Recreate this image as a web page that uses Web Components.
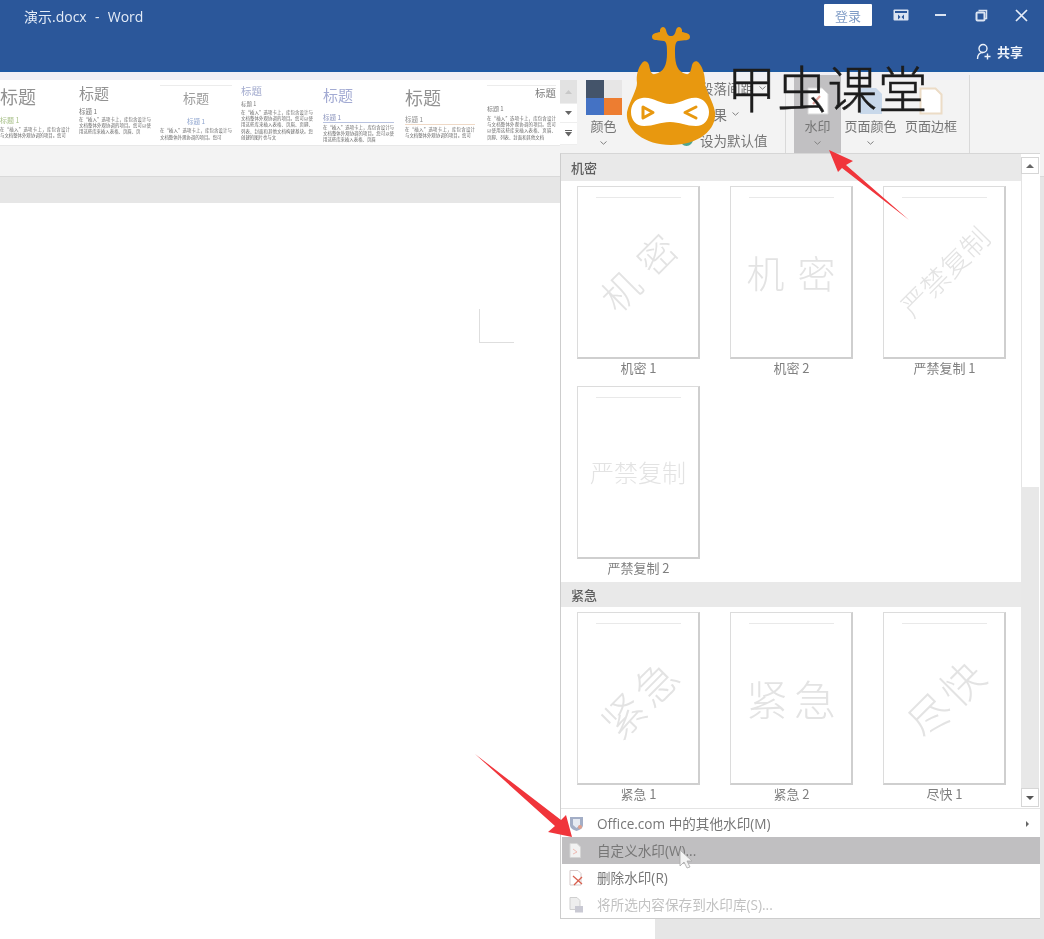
<!DOCTYPE html>
<html lang="zh-CN">
<head>
<meta charset="utf-8">
<title>演示.docx - Word</title>
<style>
html,body{margin:0;padding:0;background:#fff}
body{font-family:"Open Sans","Noto Sans CJK SC",sans-serif}
</style>
</head>
<body>
<word-app>
  <title-bar slot="top" doc="演示.docx  -  Word"></title-bar>
  <ribbon-bar slot="top"></ribbon-bar>
  <ruler-band slot="top"></ruler-band>
  <doc-area slot="top"></doc-area>
  <watermark-menu slot="over"></watermark-menu>
  <brand-logo slot="over"></brand-logo>
  <annot-layer slot="over"></annot-layer>
</word-app>
<script>
const CJK='"Noto Sans CJK SC","Noto Sans",sans-serif';
const UI='"Open Sans","Noto Sans CJK SC",sans-serif';
function def(name,render){
  customElements.define(name,class extends HTMLElement{
    connectedCallback(){
      if(this.shadowRoot)return;
      this.attachShadow({mode:'open'}).innerHTML=render(this);
    }
  });
}
const chev=(c='#808080')=>`<svg width="7" height="4" viewBox="0 0 7 4"><path d="M.5.5 3.5 3.2 6.5.5" fill="none" stroke="${c}" stroke-width="1"/></svg>`;

def('word-app',()=>`<style>
:host{display:block;position:relative;width:1044px;height:939px;overflow:hidden;background:#fff;filter:blur(.6px)}
.flow{display:flex;flex-direction:column;height:100%}
</style><div class="flow"><slot name="top"></slot></div><slot name="over"></slot>`);

def('title-bar',h=>`<style>
:host{display:flex;flex:0 0 72px;height:72px;box-sizing:border-box;background:#2b579a;border-bottom:2px solid #1f5aa3;flex-direction:column;color:#fff;font:14px ${UI}}
.r1{display:flex;align-items:center;height:34px;padding-left:24px}
.doc{color:#e3ebf7;white-space:pre;flex:1;margin-top:-2px;word-spacing:.5px}
.login{width:48px;height:22px;background:#fff;display:flex;align-items:center;justify-content:center;color:#7f9cc6;font:13px ${CJK};margin:-4px 0 0 0;border-radius:1px}
.win{display:flex;align-items:center;width:172px;margin-top:-4px;height:30px}
.win span{width:40px;display:flex;justify-content:center}
.r2{display:flex;justify-content:flex-end;align-items:center;padding:8px 21px 0 0;gap:5px;color:#eef3fb;font:700 13px ${CJK}}
</style>
<div class="r1"><div class="doc">${h.getAttribute('doc')}</div><div class="login">登录</div>
<div class="win">
<span style="margin-left:9px"><svg width="16" height="12" viewBox="0 0 16 12"><rect x=".5" y=".5" width="15" height="11" rx="1" fill="#dbe4f2"/><rect x="2" y="2" width="12" height="2" fill="#2b579a"/><path d="M5 5.5 7.5 8 5 10.500ZM11 5.500 8.500 8 11 10.500Z" fill="#2b579a"/></svg></span>
<span><svg width="12" height="12" viewBox="0 0 12 12"><rect y="5" width="11" height="2" fill="#dbe4f2"/></svg></span>
<span><svg width="13" height="13" viewBox="0 0 13 13"><path d="M3.500 1.500h8v8h-2" fill="none" stroke="#dbe4f2" stroke-width="1.500"/><rect x="1.500" y="3.500" width="8" height="8" rx="1" fill="none" stroke="#dbe4f2" stroke-width="2"/></svg></span>
<span><svg width="13" height="13" viewBox="0 0 13 13"><path d="M1 1 12 12M12 1 1 12" stroke="#e6edf8" stroke-width="1.700" fill="none"/></svg></span>
</div></div>
<div class="r2"><svg width="16" height="17" viewBox="0 0 16 17"><circle cx="7" cy="5.500" r="4" fill="none" stroke="#eef3fb" stroke-width="1.400"/><path d="M1.500 16c0-4 2-6.500 5.500-6.500M8.500 13.500h6M11.500 10.500v6" fill="none" stroke="#eef3fb" stroke-width="1.400"/></svg><span>共享</span></div>`);

def('style-card',h=>{
 const a=n=>h.getAttribute(n)||'';
 const txt='在“插入”选项卡上，库包含设计与文档整体外观协调的项目。您可以使用这些库来插入表格、页眉、页脚、列表、封面和其他文档构建基块。您创建的图片也与文档外观协调。'.slice(0,+a('chars')||30);
 return `<style>
:host{display:block;flex:0 0 81px;width:81px;height:65px;box-sizing:border-box;overflow:hidden;padding:0 9px 0 ${a('pl')||0}px;font-family:${CJK};background:#fff}
.top{border-top:${a('topline')?'1px solid #ececec':'0'};margin-top:${a('topline')?5:0}px;padding-top:${a('pt')}px;text-align:${a('align')||'left'};font-size:${a('hs')}px;line-height:1.1;color:${a('hc')||'#8a8a8a'};white-space:nowrap}
.sub{font-size:${a('ss')||6}px;line-height:8px;color:${a('sc')||'#777'};margin-top:${a('sm')}px;text-align:${a('subalign')||'left'};padding-bottom:${a('subpad')||0}px;border-bottom:${a('subline')?'1px solid '+a('subline'):'0'}}
.b{font-size:4.400px;line-height:6.400px;color:#666;margin-top:${a('bm')||2}px;text-align:justify}
</style><div class="top">标题</div><div class="sub">标题 1</div><div class="b">${txt}</div>`;
});

def('ribbon-btn',h=>`<style>
:host{display:flex;flex-direction:column;align-items:center;box-sizing:border-box;height:78px;width:${h.getAttribute('w')}px;margin-left:${h.getAttribute('ml')||0}px;background:${h.hasAttribute('on')?'#c1c0c2':'transparent'};font:13px ${CJK};color:#757575}
.i{height:40px;display:flex;align-items:flex-end;justify-content:center}
.l{height:22px;line-height:22px;white-space:nowrap}
.c{margin-top:4px;height:8px;display:flex}
</style><div class="i"><slot></slot></div><div class="l">${h.getAttribute('label')}</div><div class="c">${h.hasAttribute('nochev')?'':chev()}</div>`);

def('ribbon-bar',()=>`<style>
:host{display:flex;flex:0 0 104px;height:104px;box-sizing:border-box;background:linear-gradient(#f0f0f5 0,#f0f0f5 8px,#f3f3f3 8px);padding-top:3px;align-items:flex-start;overflow:hidden}
.gal{flex:0 0 560px;height:65px;margin-top:5px;display:flex;overflow:hidden;background:#fff;margin-left:0;border-bottom:1px solid #e8e8e8}
.cards{display:flex;margin-left:-2px}
.scr{flex:0 0 17px;margin-top:5px;height:65px;display:grid;grid-template-rows:24px 19px 22px;background:#fff}
.scr div{display:flex;align-items:center;justify-content:center;border-bottom:1px solid #eee}
.scr div:first-child{background:#e2e2e2}
.opts{margin-left:60px;width:103px;height:78px;display:flex;flex-direction:column;font:13.500px ${CJK};color:#757575;padding-top:0}
.opts div{height:26px;display:flex;align-items:center;gap:5px;padding-left:18px;white-space:nowrap;position:relative;top:0}
.dot{position:absolute;left:-2px;top:6px;width:13px;height:13px;border-radius:50%;background:#4ea58f}
.sep{width:1px;height:78px;background:#d9d9d9;margin-left:0}
.swatch{display:grid;grid-template:repeat(2,1fr)/repeat(2,1fr);width:36px;height:35px}
</style>
<div class="gal"><div class="cards">
<style-card pl="2" hs="18" hc="#929292" pt="7" sm="9" sc="#a9c18a" ss="7" bm="2" chars="30"></style-card>
<style-card pl="0" hs="15" hc="#929292" pt="5" sm="5" ss="6.500" bm="1" chars="46"></style-card>
<style-card pl="0" hs="13" hc="#9c9c9c" topline="1" pt="5" align="center" sm="12" subalign="center" sc="#8fa5cf" ss="6.500" bm="2" chars="30"></style-card>
<style-card pl="0" hs="10.500" hc="#a4accf" pt="5" sm="3" ss="5.500" bm="1" chars="72"></style-card>
<style-card pl="1" hs="15" hc="#a3abd3" pt="7" sm="9" ss="6.500" sc="#8b94bd" subline="#b9c3e0" subpad="1" bm="1" chars="44"></style-card>
<style-card pl="2" hs="18" hc="#929292" pt="8" sm="7" ss="6.500" sc="#8f8f8f" subline="#efd9c6" subpad="1" bm="1" chars="30"></style-card>
<style-card pl="3" hs="10.500" hc="#7d7d7d" topline="1" pt="1" align="right" sm="6" ss="6" bm="2" chars="58"></style-card>
</div></div>
<div class="scr"><div><svg width="7" height="4" viewBox="0 0 7 4"><path d="M0 4 3.500 0 7 4Z" fill="#c8c8c8"/></svg></div><div><svg width="7" height="4" viewBox="0 0 7 4"><path d="M0 0 3.500 4 7 0Z" fill="#666"/></svg></div><div><svg width="7" height="7" viewBox="0 0 7 7"><rect width="7" height="1" fill="#666"/><path d="M0 2 3.500 6.500 7 2Z" fill="#666"/></svg></div></div>
<ribbon-btn w="37" ml="8" label="颜色"><div class="swatch"><i style="background:#44546a"></i><i style="background:#e7e6e6"></i><i style="background:#4472c4"></i><i style="background:#ed7d31"></i></div></ribbon-btn>
<div class="opts"><div>段落间距 ${chev()}</div><div>效果 ${chev()}</div><div><span class="dot"></span>设为默认值</div></div>
<div class="sep"></div>
<ribbon-btn w="47" ml="8" on label="水印"><svg width="24" height="28" viewBox="0 0 24 28"><path d="M2 1h14l6 6v20H2Z" fill="#fff" stroke="#d9d9d9"/><path d="M7 17 14 9" stroke="#e8a7a0" stroke-width="2"/></svg></ribbon-btn>
<ribbon-btn w="55" ml="2" label="页面颜色"><svg width="26" height="28" viewBox="0 0 26 28"><path d="M2 1h16l6 6v20H2Z" fill="#c8d8ea"/></svg></ribbon-btn>
<ribbon-btn w="54" ml="6" nochev label="页面边框"><svg width="24" height="28" viewBox="0 0 24 28"><path d="M1.500 1.500h15l6 6v19h-21Z" fill="#fff" stroke="#ecdcc6" stroke-width="2"/></svg></ribbon-btn>
<div class="sep" style="margin-left:11px"></div>`);

def('ruler-band',()=>`<style>:host{display:block;flex:0 0 27px;height:27px;box-sizing:border-box;background:#e6e6e6;border-top:1px solid #d9d9d9}</style>`);

def('doc-area',()=>`<style>
:host{display:flex;flex:1;background:#e6e6e6;min-height:0}
.page{flex:0 0 655px;background:#fff;box-sizing:border-box;padding:106px 0 0 479px}
.crop{width:35px;height:34px;box-sizing:border-box;border-left:1px solid #dedede;border-bottom:1px solid #dedede}
</style><div class="page"><div class="crop"></div></div>`);

def('wm-thumb',h=>{
 const a=n=>h.getAttribute(n)||'';
 return `<style>
:host{display:block;width:123px;font-family:${CJK}}
.p{position:relative;box-sizing:border-box;width:123px;height:173px;background:#fff;border:1px solid #dcdcdc;border-right:2px solid #cfcfcf;border-bottom:2px solid #cfcfcf;display:flex;align-items:center;justify-content:center;overflow:hidden}
.line{position:absolute;left:18px;right:17px;top:10px;height:1px;background:#e9e9e9}
.m{font-size:${a('size')}px;letter-spacing:${a('gap')||0}px;padding-left:${a('gap')||0}px;color:#e3e3e3;font-weight:300;white-space:nowrap;transform:translateY(-1px) rotate(${a('rot')||0}deg)}
.l{height:23px;line-height:18px;text-align:center;font-size:13px;color:#808080;white-space:nowrap}
</style><div class="p"><div class="line"></div><div class="m">${a('mark')}</div></div><div class="l">${a('label')}</div>`;
});

def('wm-section',h=>`<style>
:host{display:block}
.h{height:${h.getAttribute('hh')}px;background:#e9e9e9;font:500 13px/${h.getAttribute('hh')}px ${CJK};color:#5e5e5e;padding-left:10px;box-sizing:border-box;padding-top:${h.getAttribute('ht')||0}px}
.g{display:grid;grid-template-columns:repeat(3,123px);column-gap:30px;row-gap:4px;padding:5px 0 0 16px}
</style><div class="h">${h.getAttribute('title')}</div><div class="g"><slot></slot></div>`);

def('wm-row',h=>`<style>
:host{display:flex;align-items:center;height:27px;box-sizing:border-box;padding-left:8px;font:13.600px ${UI};color:${h.hasAttribute('off')?'#c2c2c2':'#777'};background:${h.hasAttribute('on')?'#c0bfc1':'transparent'};margin-left:${h.hasAttribute('on')?1:0}px}
.ic{width:28px;height:16px;display:flex;align-items:center;margin-left:${h.hasAttribute('on')?-1:0}px}
.t{flex:1;white-space:nowrap;margin-top:-1px}
.ar{width:0;height:0;border-left:3px solid #666;border-top:3px solid transparent;border-bottom:3px solid transparent;margin-right:11px}
</style><div class="ic"><slot></slot></div><div class="t">${h.getAttribute('text')}</div>${h.hasAttribute('sub')?'<div class="ar"></div>':''}`);

def('wm-scroll',()=>`<style>
:host{display:grid;grid-template-rows:3px 17px 313px 1fr 19px 1px;width:18px;background:#fff}
.b{display:flex;align-items:center;justify-content:center;background:#fff;border:1px solid #d6d6d6;box-sizing:border-box}
.tr{background:#e8e8e8}
.th{background:#fff;border-left:1px solid #e4e4e4}
</style><div></div><div class="b"><svg width="8" height="4" viewBox="0 0 8 4"><path d="M0 4 4 0 8 4Z" fill="#666"/></svg></div><div class="th"></div><div class="tr"></div><div class="b"><svg width="8" height="4" viewBox="0 0 8 4"><path d="M0 0 4 4 8 0Z" fill="#555"/></svg></div><div></div>`);

def('watermark-menu',()=>`<style>
:host{position:absolute;left:560px;top:153px;width:480px;height:766px;box-sizing:border-box;background:#fff;border:1px solid #cdcdcd;border-top-color:#d6d6d6;border-right:0;display:flex;flex-direction:column}
.top{display:grid;grid-template-columns:460px 19px;height:655px;border-bottom:1px solid #e4e4e4;box-sizing:border-box}
.list{display:flex;flex-direction:column}
.rows{display:flex;flex-direction:column;padding-top:1px}
</style>
<div class="top"><div class="list">
<wm-section title="机密" hh="27">
<wm-thumb label="机密 1" mark="机密" size="38" gap="13" rot="-45"></wm-thumb>
<wm-thumb label="机密 2" mark="机密" size="38" gap="13"></wm-thumb>
<wm-thumb label="严禁复制 1" mark="严禁复制" size="28" rot="-45"></wm-thumb>
<wm-thumb label="严禁复制 2" mark="严禁复制" size="24"></wm-thumb>
</wm-section>
<wm-section title="紧急" hh="25" ht="0">
<wm-thumb label="紧急 1" mark="紧急" size="42" gap="4" rot="-45"></wm-thumb>
<wm-thumb label="紧急 2" mark="紧急" size="42" gap="6"></wm-thumb>
<wm-thumb label="尽快 1" mark="尽快" size="42" gap="4" rot="-45"></wm-thumb>
</wm-section>
</div><wm-scroll></wm-scroll></div>
<div class="rows">
<wm-row text="Office.com 中的其他水印(M)" sub><svg width="15" height="15" viewBox="0 0 15 15"><path d="M1 1h13v8c0 3-3 5-6.500 6C4 14 1 12 1 9Z" fill="#a3aec6"/><path d="M4 3h7v6l-3.500 3L4 9Z" fill="#e6eaf2"/><circle cx="11" cy="11" r="2" fill="#e2a08d"/></svg></wm-row>
<wm-row text="自定义水印(W)..." on><svg width="12" height="15" viewBox="0 0 12 15"><path d="M1 .5h7l3.500 3.500v10.500H1Z" fill="#f2f2f2" stroke="#d5d5d5"/><path d="M4 6 8 9 4 11" fill="none" stroke="#eebbb4"/></svg></wm-row>
<wm-row text="删除水印(R)"><svg width="15" height="16" viewBox="0 0 15 16"><path d="M1 .5h8l3 3v11.500H1Z" fill="#fff" stroke="#d5c9c9"/><path d="M4 6 13 14M13 7 5 15" stroke="#d9604f" stroke-width="1.300"/></svg></wm-row>
<wm-row text="将所选内容保存到水印库(S)..." off><svg width="15" height="16" viewBox="0 0 15 16"><path d="M1 .5h7l3 3v9H1Z" fill="#eee" stroke="#cfcfcf"/><rect x="6" y="9" width="8" height="6.500" fill="#c9c9d3"/></svg></wm-row>
</div>`);

def('brand-logo',()=>`<style>
:host{position:absolute;left:620px;top:20px;display:flex;align-items:flex-start;pointer-events:none}
svg{flex:none}
.t{margin:37px 0 0 -3px;font:300 49.500px/60px ${CJK};color:#1c1c1c;-webkit-text-stroke:.5px #1c1c1c;white-space:nowrap;letter-spacing:.8px}
</style>
<svg width="110" height="130" viewBox="0 0 110 130">
<path fill="#e8980f" d="M51 16C48 16 47 14 46 10 45 6 41 6 40 10L40 12C36 13 32 13 32 17 32 21 38 20 44 21 47 22 47 27 47 33 47 45 44 52 35 54 31 55 30 50 29 45 28 41 24 40 22 43 18 48 16 55 17 63 17 70 10 80 7 92 5 110 25 125 51 125 78 125 97 110 95 92 93 80 85 70 85 63 85 55 83 48 79 43 77 40 73 41 72 45 71 50 70 55 66 54 58 52 55 45 55 33 55 27 55 22 58 21 64 20 70 21 70 17 70 13 66 13 62 12L62 10C61 6 57 6 56 10 55 14 54 16 51 16Z"/>
<path fill="#fff" d="M22 78C32 76 40 84 50 84 60 84 68 76 78 78 86 80 89 87 89 92 89 100 84 106 76 106 66 106 60 102 50 102 40 102 34 106 24 106 16 106 11 100 11 92 11 86 14 79 22 78Z"/>
<path d="M23 87 33 92.500 23 98Z" fill="none" stroke="#e8980f" stroke-width="3" stroke-linejoin="round"/>
<path d="M76 87 65 92.500 76 98" fill="none" stroke="#e8980f" stroke-width="3" stroke-linecap="round" stroke-linejoin="round"/>
</svg><div class="t">甲虫课堂</div>`);

def('annot-layer',()=>`<style>:host{position:absolute;inset:0;pointer-events:none}svg{display:block}</style>
<svg width="1044" height="939" viewBox="0 0 1044 939">
<polygon fill="#f0353b" points="829,150 853,161 846,165 909,220 842,168 838,172"/>
<polygon fill="#f0353b" points="475,754 561,820 566,815 572,837 548,832 555,826"/>
<path d="M680 850V866L684 862 687 868 690 867 687 861H692Z" fill="#f4f4f4" stroke="#a8a8a8" stroke-width=".8"/>
</svg>`);
</script>
</body>
</html>
